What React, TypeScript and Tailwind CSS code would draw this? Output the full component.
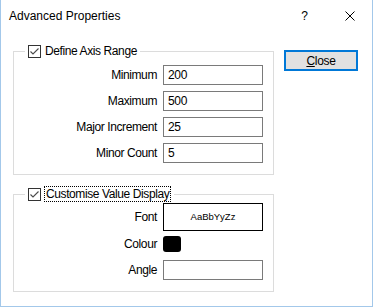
import React from "react";

const font = { fontFamily: '"Liberation Sans", Arial, sans-serif' };

const CheckBox: React.FC = () => (
  <span className="flex h-[13px] w-[13px] shrink-0 items-center justify-center border border-[#333333] bg-white">
    <svg width="11" height="11" viewBox="0 0 11 11">
      <polyline points="1.5,5.5 4,8 9.5,2.5" fill="none" stroke="#4a4a4a" strokeWidth="1.1" />
    </svg>
  </span>
);

interface RowProps {
  label: string;
  value?: string;
}

const Row: React.FC<RowProps> = ({ label, value }) => (
  <div className="flex items-center justify-end gap-[6px]">
    <span className="text-[12px] leading-none tracking-[-0.4px] text-black">{label}</span>
    <div className="flex h-[20px] w-[100px] items-center border border-[#7a7a7a] bg-white px-[4px] text-[12px] tracking-[-0.3px] text-black">
      {value}
    </div>
  </div>
);

export default function App() {
  return (
    <div
      className="flex h-[307px] w-[373px] flex-col border-x border-b border-[#a3c8ea] bg-white"
      style={font}
    >
      {/* title bar */}
      <div className="flex h-[31px] shrink-0 items-center pl-[8px] text-[12px] text-black">
        <span className="flex-1">Advanced Properties</span>
        <span className="mr-[37px] text-[12px]">?</span>
        <svg width="10" height="10" viewBox="0 0 10 10" className="mr-[17px]">
          <path d="M0.5 0.5 L9.5 9.5 M9.5 0.5 L0.5 9.5" stroke="#000" strokeWidth="1" />
        </svg>
      </div>

      <div className="flex pl-[12px] pt-[12px]">
        <div className="flex w-[261px] flex-col">
          <fieldset className="border border-[#dcdcdc] pb-[11px] pr-[10px]">
            <legend className="ml-[11px] flex h-[16px] items-center gap-[4px] px-[3px] text-[12px] leading-none tracking-[-0.4px] text-black">
              <CheckBox />
              <span>Define Axis Range</span>
            </legend>
            <div className="mt-[6px] flex flex-col gap-[6px]">
              <Row label="Minimum" value="200" />
              <Row label="Maximum" value="500" />
              <Row label="Major Increment" value="25" />
              <Row label="Minor Count" value="5" />
            </div>
          </fieldset>

          <fieldset className="mt-[11px] border border-[#dcdcdc] pb-[11px] pr-[10px]">
            <legend className="ml-[11px] flex h-[16px] items-center gap-[3px] px-[3px] text-[12px] leading-none tracking-[-0.4px] text-black">
              <CheckBox />
              <span className="border border-dotted border-black px-[1px] py-[1px]">
                Customise Value Display
              </span>
            </legend>
            <div className="mt-[1px] flex flex-col">
              <div className="flex items-center justify-end gap-[6px]">
                <span className="text-[12px] leading-none tracking-[-0.4px]">Font</span>
                <div className="flex h-[28px] w-[100px] items-center justify-center border border-black text-[9.5px]">
                  AaBbYyZz
                </div>
              </div>
              <div className="mt-[5px] flex items-center justify-end gap-[6px]">
                <span className="text-[12px] leading-none tracking-[-0.4px]">Colour</span>
                <div className="flex w-[100px]">
                  <div className="h-[16px] w-[18px] rounded-[3px] bg-black" />
                </div>
              </div>
              <div className="mt-[8px]">
                <Row label="Angle" />
              </div>
            </div>
          </fieldset>
        </div>

        <div className="ml-[10px] mt-[7px]">
          <button className="flex h-[21px] w-[74px] items-center justify-center border-2 border-[#0078d7] bg-[#e1e1e1] text-[12px] tracking-[-0.3px] text-black">
            <span>
              <span className="underline">C</span>lose
            </span>
          </button>
        </div>
      </div>
    </div>
  );
}
